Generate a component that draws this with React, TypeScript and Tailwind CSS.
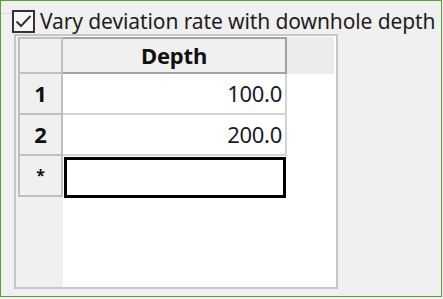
import React from 'react';

const font = { fontFamily: '"Noto Sans", "Open Sans", sans-serif' };

function CheckBox() {
  return (
    <div className="w-[23px] h-[23px] border-2 border-[#333333] bg-[#f7f7f7] flex items-center justify-center shrink-0">
      <svg width="17" height="15" viewBox="0 0 17 15">
        <polyline points="1.5,7.5 6,12 15.5,2" fill="none" stroke="#333333" strokeWidth="2" />
      </svg>
    </div>
  );
}

const rows = [
  { head: '1', value: '100.0' },
  { head: '2', value: '200.0' },
];

export default function App() {
  return (
    <div className="w-[443px] h-[299px] bg-[#f0f0f0]" style={font}>
      <div className="w-[442px] h-[297px] border border-[#4ea52f] relative">
        {/* group box edge */}
        <div className="absolute left-0 top-[12px] w-[11px] h-px bg-[#d9d9d9]" />

        <div className="flex items-center gap-[5px] pl-[11px] pt-[8px] h-[32px]">
          <CheckBox />
          <span className="text-[21px] leading-none text-[#1e1e1e] tracking-[-0.1px] whitespace-nowrap">
            Vary deviation rate with downhole depth
          </span>
        </div>

        <div className="ml-[13px] mt-[1px] w-[324px] h-[255px] border-2 border-[#c6c6c6] bg-white flex">
          {/* row header column */}
          <div className="w-[47px] h-full bg-[#f0f0f0] flex flex-col pl-[2px]">
            <div className="h-[37px] mt-px border-2 border-[#c0c0c0]" />
            {rows.map((r) => (
              <div
                key={r.head}
                className="h-[41px] border-2 border-t-0 border-[#c0c0c0] flex items-center justify-center text-[22px] font-bold text-[#111]"
              >
                {r.head}
              </div>
            ))}
            <div className="h-[41px] border-2 border-t-0 border-[#c0c0c0] flex justify-center pt-[7px] text-[16px] font-bold text-[#111]">
              *
            </div>
          </div>

          {/* data column */}
          <div className="w-[224px] h-full flex flex-col">
            <div className="h-[37px] mt-px border-2 border-l-0 border-[#a2a2a2] bg-[#f0f0f0] flex items-center justify-center text-[22px] font-bold text-[#111] tracking-[-0.2px]">
              Depth
            </div>
            {rows.map((r) => (
              <div
                key={r.head}
                className="h-[41px] border-r-2 border-b-2 border-[#d4d4d4] flex items-center justify-end pr-[3px] text-[22px] text-[#1a1a2a] tracking-[-0.3px]"
              >
                {r.value}
              </div>
            ))}
            <div className="h-[41px] border-[3px] border-[#000] ml-px mr-[1px] mt-px" />
          </div>

          {/* filler column */}
          <div className="flex-1 h-full flex flex-col">
            <div className="h-[37px] mt-px bg-[#ececec] mr-[2px]" />
          </div>
        </div>
      </div>
    </div>
  );
}
